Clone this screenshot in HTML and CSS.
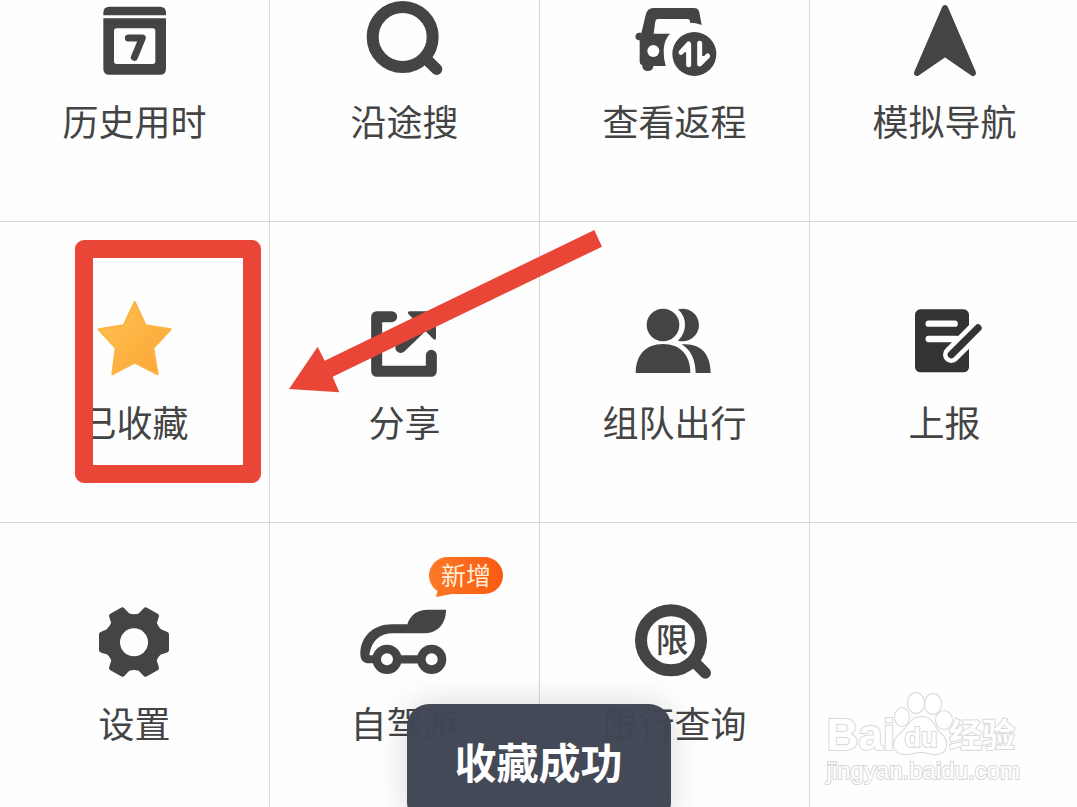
FILE: index.html
```
<!DOCTYPE html>
<html lang="zh">
<head>
    <meta charset="UTF-8">
    <meta name="viewport" content="width=device-width, initial-scale=1.0">
    <title>收藏成功</title>
    <link rel="stylesheet" href="styles.css">
</head>
<body>

<main class="board">
    <div class="menu-grid">
        <button class="menu-item">
            <svg class="icon" viewBox="87 6 273 228">
                <path d="M130 46V38Q130 20 148 20H300Q318 20 318 38V46Z"/>
                <path d="M130 55H318V206Q318 224 300 224H148Q130 224 130 206Z"/>
                <rect class="white" x="162" y="85" width="124" height="107" rx="8"/>
                <path class="line" stroke-width="21" d="M205 114H247L223 172"/>
            </svg>
            <span>历史用时</span>
        </button>
        <button class="menu-item">
            <svg class="icon" viewBox="57 6 273 228">
                <circle class="line" cx="188" cy="111" r="90" stroke-width="36"/>
                <path class="line" stroke-width="34" d="M258 176L290 208"/>
            </svg>
            <span>沿途搜</span>
        </button>
        <button class="menu-item">
            <svg class="icon" viewBox="87 6 273 228">
                <path d="M119 120L137 45Q142 24 160 24H282Q295 24 298 37L305 75Q288 68 270 68V62Q269 57 262 57H175Q167 57 166 64L161 101H210Q192 120 191 150Q190 175 197 198H160V200A17 17 0 0 1 127 200V196Q119 193 119 185V121H115A12 12 0 0 1 115 98H124Z"/>
                <circle class="white" cx="160" cy="153" r="18"/>
                <circle cx="283" cy="162" r="66"/>
                <path class="line white-line" stroke-width="15" d="M243 157L266 132V194M299 130V192L323 168"/>
                <path class="white" d="M243 157L266 132V157ZM299 192L323 168H299Z"/>
            </svg>
            <span>查看返程</span>
        </button>
        <button class="menu-item">
            <svg class="icon" viewBox="87 6 273 228">
                <path class="line solid" stroke-width="18" d="M225 24L141 219L225 161L309 219Z"/>
            </svg>
            <span>模拟导航</span>
        </button>

        <button class="menu-item">
            <svg class="icon" viewBox="87 219 273 228">
                <defs>
                    <linearGradient id="starFill" x1="0" y1="0" x2="1" y2="1">
                        <stop offset="0" stop-color="#ffc352"/>
                        <stop offset="1" stop-color="#fba434"/>
                    </linearGradient>
                </defs>
                <path class="star" d="M224 216L257 286L332 298L280 354L293 433L224 398L157 433L167 354L116 298L191 286Z"/>
            </svg>
            <span>已收藏</span>
        </button>
        <button class="menu-item">
            <svg class="icon" viewBox="237 249 273 228">
                <path class="line" stroke-width="33" d="M335 290H290V454H454V406"/>
                <path class="line" stroke-width="32" d="M362 383L440 308"/>
                <path d="M390 274H456Q468 274 468 286V354Q467 363 460 357L386 283Q380 275 390 274Z"/>
            </svg>
            <span>分享</span>
        </button>
        <button class="menu-item">
            <svg class="icon" viewBox="87 39 273 228">
                <circle cx="189" cy="105" r="49"/>
                <path d="M234 58A49 49 0 1 1 234 152Q255 132 255 105Q255 78 234 58Z"/>
                <path d="M107 249C107 195 137 162 189 162C241 162 271 195 271 249Z"/>
                <path d="M245 163C303 158 332 193 332 249H287C286 210 274 181 245 163Z"/>
            </svg>
            <span>组队出行</span>
        </button>
        <button class="menu-item">
            <svg class="icon dark" viewBox="57 39 273 228">
                <rect x="105" y="58" width="162" height="189" rx="16"/>
                <path class="line white-line" stroke-width="19" d="M146 101H224M146 147H230"/>
                <path class="line white-line" stroke-width="50" d="M214 194L294 114"/>
                <path class="line" stroke-width="22" d="M214 194L294 114"/>
            </svg>
            <span>上报</span>
        </button>

        <button class="menu-item">
            <svg class="icon" viewBox="27 42 273 228">
                <path class="line solid" stroke-width="16" d="M127 60L143 77Q162 84 181 77L197 60L229 78L222 99Q230 119 240 125L259 133V180L238 187Q224 200 222 212L229 234L197 252L181 236Q162 228 143 236L127 252L95 234L102 212Q100 200 86 187L65 180V133L84 125Q96 116 102 99L95 78Z"/>
                <circle class="white" cx="162" cy="157" r="42"/>
            </svg>
            <span>设置</span>
        </button>
        <button class="menu-item">
            <svg class="icon" viewBox="57 192 273 228">
                <path d="M318 209C318 250 295 280 248 280H160C120 280 94 302 88 346H105V370H88C70 370 61 360 61 342C61 290 100 253 155 253H202C210 225 232 209 264 209Z"/>
                <path class="line" stroke-width="25" d="M160 358H260"/>
                <circle cx="141" cy="358" r="44"/>
                <circle cx="275" cy="358" r="44"/>
                <circle class="white" cx="141" cy="358" r="18"/>
                <circle class="white" cx="275" cy="358" r="18"/>
            </svg>
            <span>自驾游</span>
            <em class="badge">新增</em>
        </button>
        <button class="menu-item">
            <svg class="icon" viewBox="87 42 273 228">
                <circle class="line" cx="213" cy="151" r="90" stroke-width="36"/>
                <path class="line" stroke-width="34" d="M284 217L316 249"/>
                <text class="icon-text" x="216" y="187">限</text>
            </svg>
            <span>限行查询</span>
        </button>
        <div class="menu-item"></div>
    </div>

    <!-- 标注 -->
    <div class="mark-box"></div>
    <svg class="mark-arrow" viewBox="0 0 1020 720">
        <path d="M943 30L966 80L158 470L178 517L27 507L113 380L134 422Z"/>
    </svg>

    <!-- 水印 -->
    <div class="watermark">
        <div class="watermark-logo">
            <span class="watermark-bai">Bai</span>
            <svg class="paw" viewBox="0 0 62 66">
                <ellipse cx="11" cy="26" rx="7" ry="9"/>
                <ellipse cx="25" cy="12" rx="8" ry="10"/>
                <ellipse cx="42" cy="13" rx="8" ry="10"/>
                <ellipse cx="53" cy="29" rx="8" ry="9"/>
                <path d="M31 26C42 26 43 37 50 43C58 50 57 63 45 63C38 63 36 61 30 61C24 61 21 63 14 63C1 63 0 50 9 43C17 37 19 26 31 26Z"/>
                <text x="30" y="56">du</text>
            </svg>
            <span class="watermark-name">经验</span>
        </div>
        <div class="watermark-url">jingyan.baidu.com</div>
    </div>

    <div class="toast" role="status">收藏成功</div>
</main>

</body>
</html>
```
FILE: styles.css
```
body {
    margin: 0;
    background-color: #fefefe;
    font-family: "Noto Sans CJK SC", sans-serif;
    color: #444;
}
.board {
    position: relative;
    height: 100vh;
    overflow: hidden;
}
.menu-grid {
    display: grid;
    grid-template-columns: repeat(4, 1fr);
    margin-top: -79px;
    margin-right: -3px;
}
.menu-item {
    position: relative;
    display: flex;
    flex-direction: column;
    align-items: center;
    gap: 17px;
    margin: 0;
    padding: 81px 0 76px;
    border: 0;
    border-right: 1px solid #d8d8d8;
    border-bottom: 1px solid #d8d8d8;
    background: none;
    color: inherit;
    font-family: inherit;
    font-size: 36px;
    line-height: 50px;
    cursor: pointer;
}
.icon {
    width: 91px;
    height: 76px;
    overflow: visible;
    fill: #444;
    stroke: none;
    color: #444;
}
.icon.dark {
    fill: #333;
    color: #333;
}
.icon .line {
    fill: none;
    stroke: currentColor;
    stroke-linecap: round;
    stroke-linejoin: round;
}
.icon .solid {
    fill: currentColor;
}
.icon .white {
    fill: #fefefe;
}
.icon .white-line {
    stroke: #fefefe;
}
.icon .star {
    fill: url(#starFill);
    stroke: #fdb343;
    stroke-width: 6px;
    stroke-linejoin: round;
}
.icon-text {
    font-size: 98px;
    font-weight: 500;
    text-anchor: middle;
}
.badge {
    position: absolute;
    top: 34px;
    left: 159px;
    padding: 0 12px 2px;
    border-radius: 19px;
    background: linear-gradient(90deg, #fb7a28, #fa5a10);
    color: #ffeed8;
    font-size: 25px;
    font-style: normal;
    line-height: 35px;
}
.badge::after {
    content: "";
    position: absolute;
    left: 7px;
    bottom: -3px;
    width: 16px;
    height: 12px;
    background-color: #fb7422;
    clip-path: polygon(0 100%, 3px 0, 100% 75%);
}
.mark-box {
    position: absolute;
    top: 240px;
    left: 75px;
    box-sizing: border-box;
    width: 186px;
    height: 243px;
    border: 18px solid #e94637;
    border-radius: 9px;
}
.mark-arrow {
    position: absolute;
    top: 220px;
    left: 280px;
    width: 340px;
    height: 240px;
    fill: #e94637;
}
.watermark {
    position: absolute;
    right: 57px;
    bottom: 22px;
    color: #fff;
    font-family: "Liberation Sans", "Noto Sans CJK SC", sans-serif;
    -webkit-text-stroke: 2px #d8d8d8;
    paint-order: stroke fill;
}
.watermark-logo {
    display: flex;
    align-items: flex-end;
}
.watermark-bai {
    font-size: 44px;
    font-weight: bold;
    line-height: 44px;
}
.paw {
    width: 62px;
    height: 66px;
    margin: 0 -4px;
    fill: #fff;
    stroke: #d8d8d8;
    stroke-width: 2px;
}
.paw text {
    font-size: 27px;
    font-weight: bold;
    text-anchor: middle;
}
.watermark-name {
    font-size: 33px;
    font-weight: bold;
    line-height: 42px;
}
.watermark-url {
    font-size: 24px;
    line-height: 28px;
}
.toast {
    position: absolute;
    bottom: -17px;
    left: 50%;
    box-sizing: border-box;
    padding: 0 48px 6px;
    border-radius: 22px;
    background-color: rgba(64, 69, 84, 0.98);
    box-shadow: 0 0 32px rgba(0, 0, 0, 0.15);
    color: #fff;
    font-size: 42px;
    font-weight: bold;
    line-height: 114px;
    white-space: nowrap;
    transform: translateX(-50%);
}
```
